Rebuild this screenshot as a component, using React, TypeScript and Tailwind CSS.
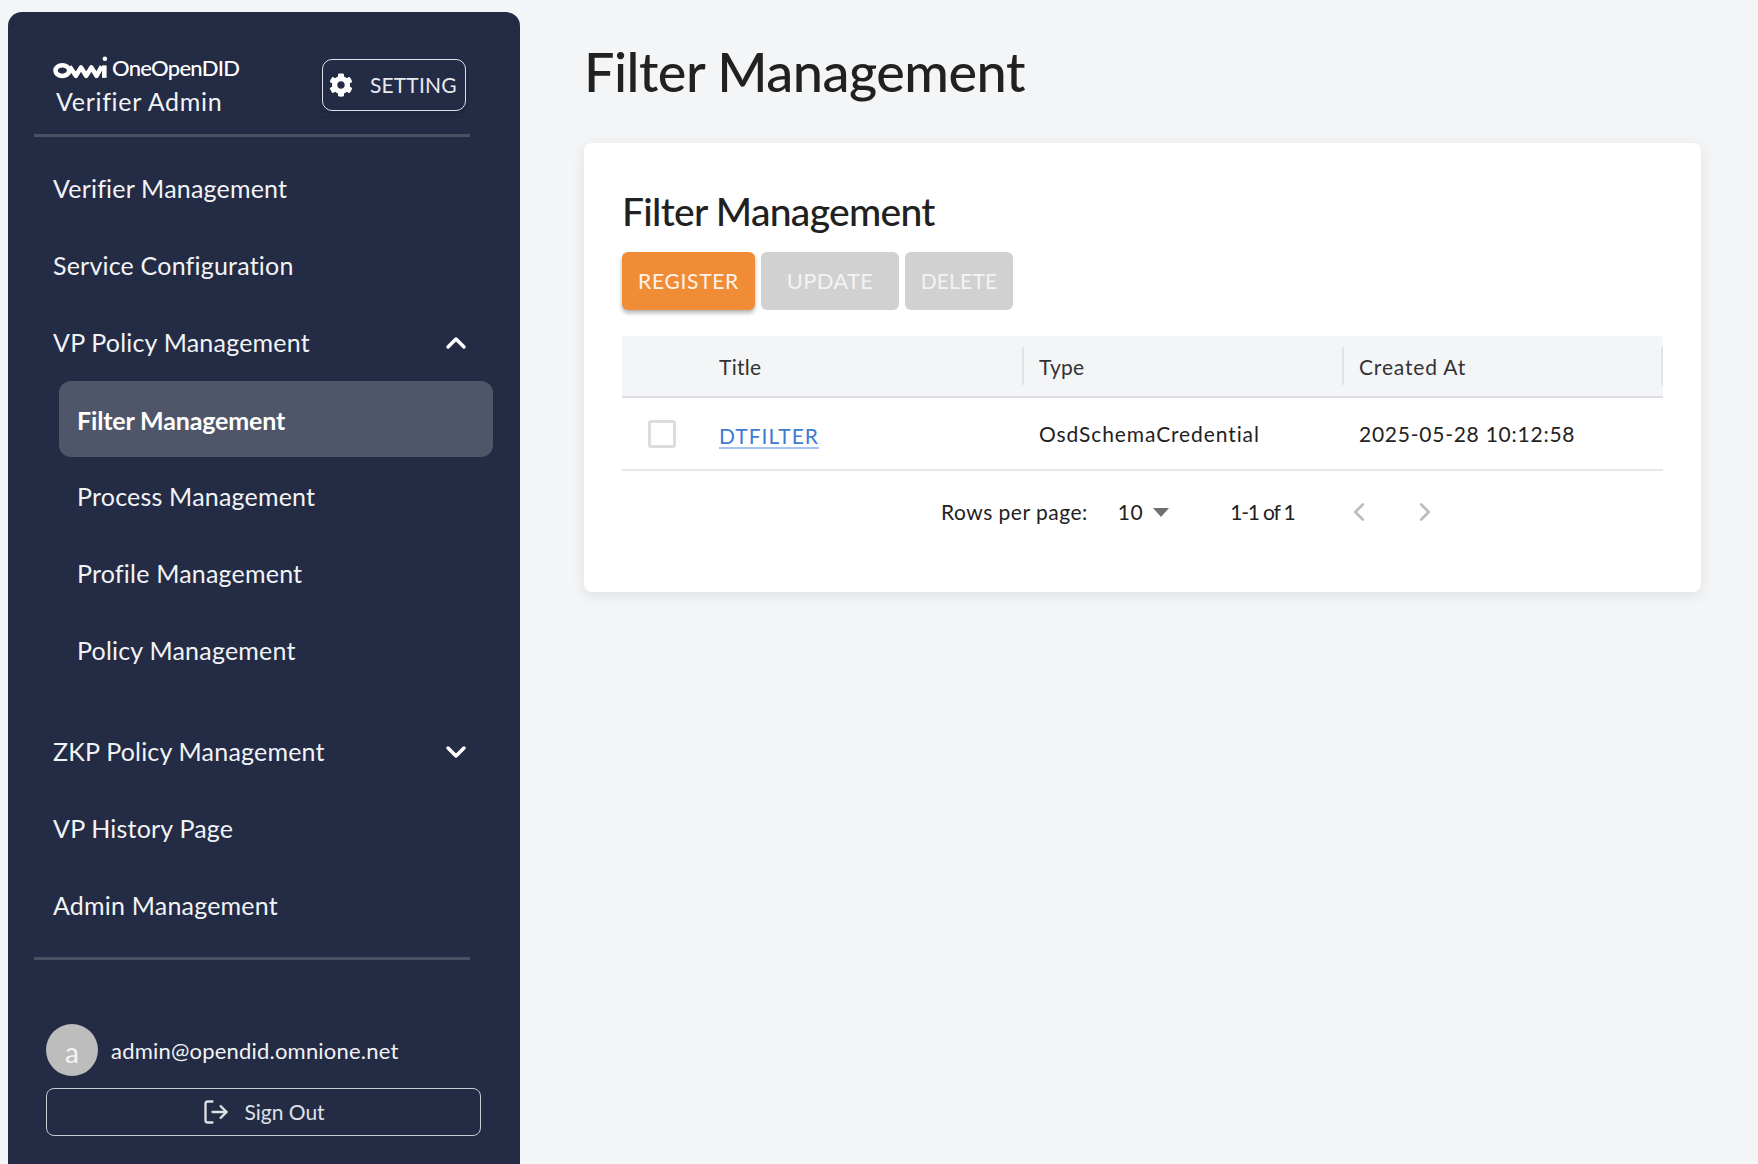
import { ChevronDown, ChevronLeft, ChevronRight, ChevronUp, LogOut } from "lucide-react";
import { FaCog } from "react-icons/fa";

const font = "font-['Lato','Liberation_Sans',sans-serif]";

function NavItem({ label, sub, active, open }: { label: string; sub?: boolean; active?: boolean; open?: boolean }) {
  if (active) {
    return (
      <div className="ml-[51px] mr-[27px] mb-px flex h-[76px] items-center rounded-[12px] bg-[#50566a] pl-[18px] pt-[3px] text-[25px] font-bold tracking-[-0.15px] text-white">
        {label}
      </div>
    );
  }
  return (
    <div
      className={`flex h-[77px] items-center justify-between pr-[48px] text-[25px] tracking-[0.2px] text-[#f2f3f5] ${
        sub ? "pl-[69px]" : "pl-[45px]"
      }`}
    >
      <span>{label}</span>
      {open === true && <ChevronUp className="h-8 w-8 text-white" strokeWidth={2.6} />}
      {open === false && <ChevronDown className="h-8 w-8 text-white" strokeWidth={2.6} />}
    </div>
  );
}

function OmniMark() {
  return (
    <svg width="56" height="24" viewBox="0 0 54 23" fill="none" stroke="white" strokeWidth="4.4">
      <ellipse cx="9" cy="14" rx="6.6" ry="5.2" />
      <path d="M16 10l6 9 5-8 5 8 5-8 5 8 5-9" strokeLinejoin="round" />
      <path d="M49.5 9v12" />
      <circle cx="50" cy="2.5" r="2.2" fill="white" stroke="none" />
    </svg>
  );
}

export default function App() {
  return (
    <div className={`flex h-screen overflow-hidden bg-[#f4f5f7] ${font}`}>
      {/* Sidebar */}
      <aside className="ml-2 mt-3 flex w-[512px] shrink-0 flex-col rounded-t-[14px] bg-[#232b45]">
        <div className="flex h-[106px] items-start justify-between border-b border-[#202840] pl-[45px] pr-[54px] pt-[43px]">
          <div>
            <div className="flex h-[26px] items-center gap-[3px]">
              <OmniMark />
              <span className="text-[22px] font-medium leading-none tracking-[-0.75px] text-white">OneOpenDID</span>
            </div>
            <div className="ml-[3px] mt-[5px] text-[25px] leading-[30px] tracking-[0.7px] text-[#f2f3f5]">Verifier Admin</div>
          </div>
          <button className="mt-[4px] flex h-[52px] w-[144px] items-center rounded-[10px] border border-[#dfe1e6] pl-[6px] text-[21px] tracking-[0.15px] text-[#e9eaee] shadow-md">
            <FaCog className="h-[24px] w-[24px] text-white" />
            <span className="ml-[17px]">SETTING</span>
          </button>
        </div>
        <div className="ml-[26px] mr-[50px] mt-[16px] h-[3px] bg-[#4a5064]" />
        <nav className="mt-[13px]">
          <NavItem label="Verifier Management" />
          <NavItem label="Service Configuration" />
          <NavItem label="VP Policy Management" open />
          <NavItem label="Filter Management" active />
          <NavItem label="Process Management" sub />
          <NavItem label="Profile Management" sub />
          <NavItem label="Policy Management" sub />
          <div className="h-[24px]" />
          <NavItem label="ZKP Policy Management" open={false} />
          <NavItem label="VP History Page" />
          <NavItem label="Admin Management" />
        </nav>
        <div className="ml-[26px] mr-[50px] mt-[13px] h-[3px] bg-[#4a5064]" />
        <div className="ml-[38px] mr-[39px] mt-[64px]">
          <div className="flex items-center gap-[13px]">
            <div className="flex h-[52px] w-[52px] items-center justify-center rounded-full bg-[#bdbdbd] pt-[4px] text-[28px] text-[#f4f4f4]">
              a
            </div>
            <span className="text-[22px] tracking-[0.2px] text-[#f2f3f5]">admin@opendid.omnione.net</span>
          </div>
          <button className="mt-[12px] flex h-[48px] w-full items-center justify-center gap-[14px] rounded-[8px] border border-[#c9ccd3] text-[21px] text-[#dfe1e6]">
            <LogOut className="h-[28px] w-[28px]" strokeWidth={2} />
            <span>Sign Out</span>
          </button>
        </div>
      </aside>

      {/* Main */}
      <main className="ml-[64px] w-[1117px] shrink-0">
        <h1 className="mt-[38px] h-[68px] text-[54px] font-medium leading-[68px] tracking-[-0.5px] text-[#212121]">
          Filter Management
        </h1>
        <section className="mt-[37px] h-[449px] rounded-[8px] bg-white pl-[38px] pr-[38px] pt-[45px] shadow-[0_4px_14px_rgba(0,0,0,0.09)]">
          <h2 className="h-[46px] text-[39px] font-medium leading-[46px] tracking-[-0.7px] text-[#212121]">
            Filter Management
          </h2>
          <div className="mt-[18px] flex gap-[6px]">
            <button className="h-[58px] w-[133px] rounded-[6px] bg-[#f08c36] text-[21px] tracking-[0.7px] text-[#fff4ea] shadow-[0_3px_4px_rgba(0,0,0,0.3)]">
              REGISTER
            </button>
            <button className="h-[58px] w-[138px] rounded-[6px] bg-[#d1d1d1] pb-[2px] text-[22px] tracking-[0.3px] text-[#f3f3f3]">
              UPDATE
            </button>
            <button className="h-[58px] w-[108px] rounded-[6px] bg-[#d1d1d1] text-[21px] tracking-[0.2px] text-[#f3f3f3]">
              DELETE
            </button>
          </div>

          <div className="mt-[26px]">
            <div className="flex h-[62px] items-center border-b-2 border-[#dedfe2] bg-[#f4f5f7] text-[21px] tracking-[0.3px] text-[#333333]">
              <div className="w-[97px]" />
              <div className="w-[303px] pt-[2px]">Title</div>
              <div className="flex h-[38px] w-[320px] items-center border-l-2 border-[#e2e3e6] pl-[15px] pt-[2px]">Type</div>
              <div className="flex h-[38px] w-[319px] items-center border-l-2 border-[#e2e3e6] pl-[15px] pt-[2px] tracking-[0.85px]">Created At</div>
              <div className="h-[38px] border-l-2 border-[#e2e3e6]" />
            </div>
            <div className="flex h-[73px] items-center border-b-2 border-[#e6e7e9] text-[21px] text-[#222222]">
              <div className="w-[97px] pl-[26px]">
                <div className="h-[28px] w-[28px] rounded-[3px] border-[3px] border-[#dcdcdc]" />
              </div>
              <div className="w-[303px] pt-[4px] tracking-[1px] text-[#3e7bd3] underline decoration-[#a5c3ec] underline-offset-[3px]">
                DTFILTER
              </div>
              <div className="w-[320px] pl-[17px] tracking-[0.9px]">OsdSchemaCredential</div>
              <div className="pl-[17px] tracking-[0.75px]">2025-05-28 10:12:58</div>
            </div>
            <div className="mt-[15px] flex h-[52px] items-center text-[21px] tracking-[0.5px] text-[#222222]">
              <span className="ml-[319px]">Rows per page:</span>
              <span className="ml-[30px]">10</span>
              <svg className="ml-[10px]" width="16" height="9" viewBox="0 0 16 9">
                <path d="M0 0h16l-8 9z" fill="#707070" />
              </svg>
              <span className="ml-[61px] tracking-[-1.2px]">1-1 of 1</span>
              <ChevronLeft className="ml-[50px] h-[30px] w-[30px] text-[#bdbdbd]" strokeWidth={2.2} />
              <ChevronRight className="ml-[36px] h-[30px] w-[30px] text-[#bdbdbd]" strokeWidth={2.2} />
            </div>
          </div>
        </section>
      </main>
    </div>
  );
}
